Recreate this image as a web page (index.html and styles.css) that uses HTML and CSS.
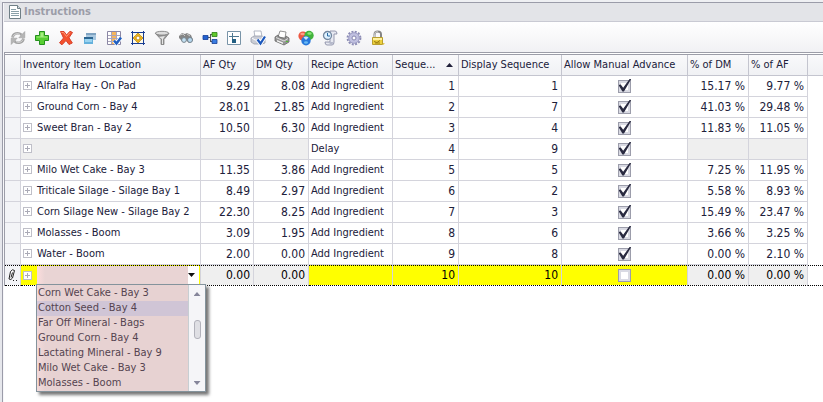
FILE: index.html
```html
<!DOCTYPE html>
<html lang="en">
<head>
<meta charset="utf-8">
<title>Instructions</title>
<link rel="stylesheet" href="styles.css">
</head>
<body>
<section class="panel">
  <header class="titlebar">
    <svg class="doc" width="14" height="14" viewBox="0 0 14 14"><path d="M1.500.5h8l3 3v10h-11z" fill="#fff" stroke="#6f7f86"/><path d="M9.500.5v3h3" fill="#d5dde0" stroke="#6f7f86"/><path d="M3 4.500h5M3 6.500h8M3 8.500h8M3 10.500h8" stroke="#8aa0a8"/></svg>
    <h1>Instructions</h1>
  </header>
  <div class="toolbar" role="toolbar" aria-label="Instruction tools">
    <button aria-label="Refresh" disabled><svg viewBox="0 0 16 16"><g fill="none" stroke="#a3a3a3" stroke-width="2.600"><path d="M2.500 7.500C3 3.500 8 1.800 11.500 4.800"/><path d="M13.500 8.500C13 12.500 8 14.200 4.500 11.200"/></g><path d="M14.800 1.500v6.300H8.800zM1.200 14.500V8.200h6z" fill="#b5b5b5" stroke="#999" stroke-width=".5"/><path d="M3 6.500C4 3.800 7.500 3 10 4.500M13 9.500c-1 2.700-4.500 3.500-7 2" stroke="#d8d8d8" fill="none"/></svg></button>
    <button aria-label="Add"><svg viewBox="0 0 16 16"><path d="M5.500 1.500h5v4h4v5h-4v4h-5v-4h-4v-5h4z" fill="#58cf33" stroke="#24911c" stroke-linejoin="round"/><path d="M6.500 2.500h3v4h4v1h-11v-1h4z" fill="#a5ee80"/></svg></button>
    <button aria-label="Delete"><svg viewBox="0 0 16 16"><path d="M2.500 1.500 6 1.500 8.500 5 12 1.200 14.500 2.500 11 7.800 14.300 13 11 14.500 8 10.500 4 14.800 1.500 12.800 5.500 8z" fill="#f4512d" stroke="#d8402a" stroke-linejoin="round"/><path d="M3.500 2.500h2l3 4L12 2.500" fill="none" stroke="#ff9a76"/></svg></button>
    <button aria-label="Windows"><svg viewBox="0 0 16 16"><path d="M4 3h10v7H4z" fill="#a9c8e0"/><path d="M4 3h10v2H4z" fill="#7fa3c2"/><path d="M2 7h9v7H2z" fill="#65b1dc"/><path d="M2 7h9v2H2z" fill="#2b6591"/><path d="M3 9h7v3H3z" fill="#9ad3f0"/></svg></button>
    <button aria-label="Choose columns"><svg viewBox="0 0 16 16"><path d="M1.500 1.500h13v13h-13z" fill="#fff" stroke="#8b87a5"/><path d="M6 2h4v12H6z" fill="#f6b55b"/><path d="M2 5.500h12M2 8.500h12M2 11.500h12M5.500 2v12M10.500 2v12" stroke="#aaa5ba"/><path d="M8 10.500l2.500 3L15 7.500" fill="none" stroke="#fff" stroke-width="4"/><path d="M8 10.500l2.500 3L15 7.500" fill="none" stroke="#205fc0" stroke-width="2.500"/></svg></button>
    <button aria-label="Best fit"><svg viewBox="0 0 16 16"><path d="M3 3h10v10H3z" fill="#fffbe9"/><path d="M2.500 1v14M13.500 1v14M1 2.500h14M1 13.500h14" stroke="#183d93"/><path d="M8 3l2.500 2.500L13 8l-2.500 2.500L8 13 5.500 10.500 3 8l2.500-2.500z" fill="#f0b51c" stroke="#a77a10" stroke-width=".7"/><circle cx="8" cy="8" r="2" fill="#fff" stroke="#c99417"/></svg></button>
    <button aria-label="Filter"><svg viewBox="0 0 16 16"><path d="M1.500 3.500L7 9.500v5h3v-5l5-6z" fill="#999" stroke="#777" stroke-width=".7"/><path d="M5 7l3 2v5h1V9l2-3z" fill="#e6e6e6"/><ellipse cx="8" cy="3.200" rx="6.700" ry="1.900" fill="#ddd" stroke="#777" stroke-width=".8"/></svg></button>
    <button aria-label="Find"><svg viewBox="0 0 16 16"><path d="M1 6l3-3 3 1 2-1 4 2 2 5-4 3-3-3-4 1-3-3z" fill="#858585"/><path d="M2 5l3-1 2 2M9 4l3 2" stroke="#c8c8c8" fill="none"/><circle cx="6" cy="10" r="2.400" fill="#c5e2f4" stroke="#75838d"/><circle cx="12" cy="10" r="2.500" fill="#b6d7ee" stroke="#75838d"/></svg></button>
    <button aria-label="Hierarchy"><svg viewBox="0 0 16 16"><path d="M6 7.500h3M9 4.500h2M9 11.500h2M8.500 4v8" stroke="#555" fill="none"/><path d="M1 5.500h5v4H1z" fill="#2362d0" stroke="#153f99" stroke-width=".8"/><path d="M10 2.500h5v4h-5z" fill="#61c82b" stroke="#2b7d15" stroke-width=".8"/><path d="M10 9.500h5v4h-5z" fill="#397ce0" stroke="#173f95" stroke-width=".8"/></svg></button>
    <button aria-label="Layout"><svg viewBox="0 0 16 16"><path d="M1.500 1.500h13v13h-13z" fill="#fff" stroke="#7994a8"/><path d="M6.500 3v10M3 6.500h10" stroke="#4f7891"/><path d="M6 9h4v4H6z" fill="#235f83"/></svg></button>
    <button aria-label="Print preview"><svg viewBox="0 0 16 16"><path d="M4 1h7l1 6H5z" fill="#fff" stroke="#a0a6b5" stroke-width=".8"/><path d="M1 8l3-2h8l3 2v5l-3 1H4l-3-2z" fill="#c9ccd5" stroke="#9a9fac" stroke-width=".8"/><path d="M2 8l3 2h9" stroke="#fff" fill="none"/><path d="M7.500 9.500l3 4L15 6.500" fill="none" stroke="#fff" stroke-width="4"/><path d="M7.500 9.500l3 4L15 6.500" fill="none" stroke="#1c58bd" stroke-width="2.200"/></svg></button>
    <button aria-label="Print"><svg viewBox="0 0 16 16"><path d="M4 7l2-6 6 1-1 6z" fill="#fff" stroke="#777" stroke-width=".8"/><path d="M1 7l3-2 1 2 6 2 1-3 3 2v4l-5 3-9-4z" fill="#959595" stroke="#686868" stroke-width=".8"/><path d="M2 7.500l8 3.500 4-2.500" stroke="#dedede" fill="none"/><path d="M3 10l6 2.500v1.500l-6-2.500z" fill="#f4f4f4"/><path d="M12 11.500h2" stroke="#4ec42c"/></svg></button>
    <button aria-label="Colours"><svg viewBox="0 0 16 16"><circle cx="5" cy="6" r="4.600" fill="#ed5842"/><circle cx="11" cy="5.500" r="4.700" fill="#42b33c"/><circle cx="8" cy="10.700" r="4.700" fill="#2878dc"/><path d="M5.500 7.500q2.500-2 5 0L8 10z" fill="#c9e8fa"/><ellipse cx="4.500" cy="4" rx="2.200" ry="1.200" fill="#ff9d87"/><ellipse cx="11.500" cy="3.500" rx="2.200" ry="1.200" fill="#8be47a"/><ellipse cx="8" cy="12.500" rx="2" ry="1.200" fill="#69bbf5"/></svg></button>
    <button aria-label="History"><svg viewBox="0 0 16 16"><path d="M8 1h5q2 0 2 3h-3v8q0 3-2 3H5q-2 0-2-3h5z" fill="#e7e9f1" stroke="#8c90a8" stroke-width=".9"/><path d="M5 12h6q0 2-1 3" fill="#b5b9cb"/><circle cx="5.500" cy="5.500" r="4" fill="#dff2ff" stroke="#7388a0" stroke-width="1.300"/><path d="M5.500 3v3H8" fill="none" stroke="#296ca5"/></svg></button>
    <button aria-label="Settings"><svg viewBox="0 0 16 16"><circle cx="8" cy="8" r="6.400" fill="none" stroke="#8c8cb5" stroke-width="2" stroke-dasharray="2 1.350"/><circle cx="8" cy="8" r="5.300" fill="#c0c0e0" stroke="#9c9cc4"/><circle cx="8" cy="8" r="2" fill="#fff" stroke="#8585ae"/></svg></button>
    <button aria-label="Lock"><svg viewBox="0 0 16 16"><path d="M4.500 8V4.500q0-3 3.300-3t3.200 3V8" fill="none" stroke="#858585" stroke-width="2"/><path d="M4.500 7V4.500q0-3 3.300-3" fill="none" stroke="#ddd" stroke-width=".8"/><path d="M2.500 7.500h10v7h-10z" fill="#ecd03e" stroke="#b89e30"/><path d="M3 8h9v2H3z" fill="#fff1a0"/><path d="M4 11.500l3 1 3-2M5 13h5" stroke="#9a7c11" fill="none"/><path d="M13 13l2 .5-2 1.500z" fill="#e1c33d"/></svg></button>
  </div>
  <table class="grid">
    <colgroup><col class="c-mark"><col class="c-item"><col class="c-af"><col class="c-dm"><col class="c-action"><col class="c-seq"><col class="c-display"><col class="c-allow"><col class="c-pdm"><col class="c-paf"><col></colgroup>
    <thead>
      <tr><th></th><th>Inventory Item Location</th><th>AF Qty</th><th>DM Qty</th><th>Recipe Action</th><th><span class="sorted">Seque...<i class="up"></i></span></th><th>Display Sequence</th><th>Allow Manual Advance</th><th>% of DM</th><th>% of AF</th><th></th></tr>
    </thead>
    <tbody>
      <tr><td></td><td><button class="plus" aria-label="Expand"></button>Alfalfa Hay - On Pad</td><td class="n">9.29</td><td class="n">8.08</td><td>Add Ingredient</td><td class="n">1</td><td class="n">1</td><td class="k"><input type="checkbox" aria-label="Allow manual advance" checked></td><td class="n">15.17 %</td><td class="n">9.77 %</td><td></td></tr>
      <tr><td></td><td><button class="plus" aria-label="Expand"></button>Ground Corn - Bay 4</td><td class="n">28.01</td><td class="n">21.85</td><td>Add Ingredient</td><td class="n">2</td><td class="n">7</td><td class="k"><input type="checkbox" aria-label="Allow manual advance" checked></td><td class="n">41.03 %</td><td class="n">29.48 %</td><td></td></tr>
      <tr><td></td><td><button class="plus" aria-label="Expand"></button>Sweet Bran - Bay 2</td><td class="n">10.50</td><td class="n">6.30</td><td>Add Ingredient</td><td class="n">3</td><td class="n">4</td><td class="k"><input type="checkbox" aria-label="Allow manual advance" checked></td><td class="n">11.83 %</td><td class="n">11.05 %</td><td></td></tr>
      <tr><td></td><td class="off"><button class="plus" aria-label="Expand"></button></td><td class="off"></td><td class="off"></td><td>Delay</td><td class="n">4</td><td class="n">9</td><td class="k"><input type="checkbox" aria-label="Allow manual advance" checked></td><td class="off"></td><td class="off"></td><td></td></tr>
      <tr><td></td><td><button class="plus" aria-label="Expand"></button>Milo Wet Cake - Bay 3</td><td class="n">11.35</td><td class="n">3.86</td><td>Add Ingredient</td><td class="n">5</td><td class="n">5</td><td class="k"><input type="checkbox" aria-label="Allow manual advance" checked></td><td class="n">7.25 %</td><td class="n">11.95 %</td><td></td></tr>
      <tr><td></td><td><button class="plus" aria-label="Expand"></button>Triticale Silage - Silage Bay 1</td><td class="n">8.49</td><td class="n">2.97</td><td>Add Ingredient</td><td class="n">6</td><td class="n">2</td><td class="k"><input type="checkbox" aria-label="Allow manual advance" checked></td><td class="n">5.58 %</td><td class="n">8.93 %</td><td></td></tr>
      <tr><td></td><td><button class="plus" aria-label="Expand"></button>Corn Silage New - Silage Bay 2</td><td class="n">22.30</td><td class="n">8.25</td><td>Add Ingredient</td><td class="n">7</td><td class="n">3</td><td class="k"><input type="checkbox" aria-label="Allow manual advance" checked></td><td class="n">15.49 %</td><td class="n">23.47 %</td><td></td></tr>
      <tr><td></td><td><button class="plus" aria-label="Expand"></button>Molasses - Boom</td><td class="n">3.09</td><td class="n">1.95</td><td>Add Ingredient</td><td class="n">8</td><td class="n">6</td><td class="k"><input type="checkbox" aria-label="Allow manual advance" checked></td><td class="n">3.66 %</td><td class="n">3.25 %</td><td></td></tr>
      <tr><td></td><td><button class="plus" aria-label="Expand"></button>Water - Boom</td><td class="n">2.00</td><td class="n">0.00</td><td>Add Ingredient</td><td class="n">9</td><td class="n">8</td><td class="k"><input type="checkbox" aria-label="Allow manual advance" checked></td><td class="n">0.00 %</td><td class="n">2.10 %</td><td></td></tr>
      <tr class="editing">
        <td class="pencil"><svg width="11" height="14" viewBox="0 0 11 14"><path d="M3.500 3.500Q5.500.5 7.500 2.500L5.500 10Q4 12.500 2 11zM5.500 4.500L4 9.500" fill="#fff" stroke="#222"/><path d="M6 12.500h1M9 12.500h1" stroke="#222"/></svg></td>
        <td class="new">
          <div class="editor">
            <button class="plus" aria-label="Expand"></button>
            <select class="combo" aria-label="Inventory item location"><option></option><option>Cotton Seed - Bay 4</option></select>
            <div class="popup">
              <ul class="options" role="listbox" aria-label="Inventory items">
                <li role="option">Corn Wet Cake - Bay 3</li>
                <li role="option" aria-selected="true">Cotton Seed - Bay 4</li>
                <li role="option">Far Off Mineral - Bags</li>
                <li role="option">Ground Corn - Bay 4</li>
                <li role="option">Lactating Mineral - Bay 9</li>
                <li role="option">Milo Wet Cake - Bay 3</li>
                <li role="option">Molasses - Boom</li>
              </ul>
              <div class="scroll"><i class="up"></i><i class="thumb"></i><i class="down"></i></div>
            </div>
          </div>
        </td>
        <td class="n off">0.00</td><td class="n off">0.00</td><td class="new"></td><td class="n new">10</td><td class="n new">10</td><td class="k new"><input type="checkbox" aria-label="Allow manual advance"></td><td class="n off">0.00 %</td><td class="n off">0.00 %</td><td></td>
      </tr>
    </tbody>
  </table>
</section>
</body>
</html>
```
FILE: styles.css
```css
* { box-sizing: border-box; }

body {
  margin: 0;
  background: #f1f1f4;
  color: #20203a;
  font: 11px/14px "DejaVu Sans Condensed", "Noto Sans", sans-serif;
}

button { padding: 0; border: 0; background: none; }

.panel {
  min-height: 100vh;
  border-top: 2px solid #eff0f3;
  border-left: 2px solid #e6e7ec;
  background: #fff;
  box-shadow: inset 1px 1px #9b9ca9, inset 2px 2px #f7f7fa;
  padding: 1px 0 0 2px;
}

.titlebar {
  display: flex;
  align-items: center;
  gap: 2px;
  height: 19px;
  padding-left: 4px;
  border-bottom: 1px solid #c9cad3;
  background: #e3e4e8;
}

.titlebar h1 {
  margin: 0;
  color: #9c9da8;
  font-size: 11px;
  font-weight: bold;
}

.toolbar {
  display: flex;
  align-items: center;
  gap: 8px;
  height: 30px;
  padding: 2px 6px 0;
  background: linear-gradient(#fff, #f1f1f4);
}

.toolbar button, .toolbar svg { display: block; width: 16px; height: 16px; }

.grid {
  width: 100%;
  table-layout: fixed;
  border-collapse: separate;
  border-spacing: 0;
  border-top: 3px double #9c9da8;
  border-left: 1px solid #9c9da8;
}

.c-mark { width: 16px; }
.c-item { width: 180px; }
.c-af { width: 53px; }
.c-dm { width: 55px; }
.c-action { width: 84px; }
.c-seq { width: 66px; }
.c-display { width: 103px; }
.c-allow { width: 126px; }
.c-pdm { width: 61px; }
.c-paf { width: 59px; }

th, td {
  height: 21px;
  padding: 0 3px 0 2px;
  border-right: 1px solid #d4d4dc;
  border-bottom: 1px solid #d4d4dc;
  text-align: left;
  white-space: nowrap;
}

th {
  padding: 0 2px;
  border-color: #c4c5cf;
  background: linear-gradient(#f9f9fb, #f0f1f4);
  font-weight: normal;
}

th:last-child, td:last-child { border-right: 0; }
td:last-child { border-bottom: 0; }
td:first-child { padding: 0; background: #f3f4f7; }
.n { padding-right: 3px; font-size: 12px; text-align: right; }
.k { text-align: center; }
.off { background: #efefef; }
.new { background: #ff0; }

.sorted { display: flex; align-items: center; justify-content: space-between; padding-right: 3px; }

.up, .down {
  width: 7px;
  height: 4px;
  background: currentColor;
  clip-path: polygon(50% 0, 100% 100%, 0 100%);
}

.down { clip-path: polygon(0 0, 100% 0, 50% 100%); }

.plus {
  width: 9px;
  height: 9px;
  margin-right: 5px;
  border: 1px solid #bfbfc8;
  background:
    linear-gradient(#aaaab6, #aaaab6) center / 5px 1px no-repeat,
    linear-gradient(#aaaab6, #aaaab6) center / 1px 5px no-repeat,
    #fff;
}

input[type="checkbox"] {
  appearance: none;
  display: block;
  width: 13px;
  height: 13px;
  margin: 0 auto;
  border: 1px solid #9c9dab;
  background: #fff;
  box-shadow: inset 0 0 0 2px #d9dae3;
}

input:checked::after {
  content: "";
  display: block;
  width: 13px;
  height: 13px;
  margin-top: -2px;
  background: #292a40;
  clip-path: polygon(0 50%, 17% 46%, 36% 72%, 88% 0, 100% 0, 42% 100%, 30% 100%);
}

.editing td {
  border-bottom: 1px dotted #000;
  background-clip: padding-box;
  background-image: repeating-linear-gradient(90deg, #000 0 1px, transparent 1px 2px);
  background-size: 100% 1px;
  background-repeat: no-repeat;
  color: #000;
}

.pencil svg { display: block; margin: 0 auto; }
td.new:nth-child(2) { padding-right: 1px; }

.editor { position: relative; display: flex; align-items: center; }

.combo {
  flex: 1;
  height: 18px;
  border: 0;
  border-radius: 0;
  appearance: none;
  background:
    linear-gradient(90deg, #fcdcdc, #e9d4d4 8px) left / 151px 100% no-repeat,
    #fff;
}

.editor::after {
  content: "";
  position: absolute;
  right: 4px;
  width: 7px;
  height: 4px;
  background: #111;
  clip-path: polygon(0 0, 100% 0, 50% 100%);
}

.popup {
  position: absolute;
  z-index: 1;
  top: 100%;
  left: 13px;
  display: flex;
  width: 170px;
  border: 1px solid #84939c;
  background: #fff;
  box-shadow: 3px 3px 3px #777;
  color: #554450;
}

.options {
  flex: 1;
  margin: 0;
  padding: 1px 0 0;
  list-style: none;
  background: linear-gradient(90deg, #f4dada, #e7d2d2 8px);
}

.options li { height: 15px; padding-left: 1px; }
.options [aria-selected="true"] { background: linear-gradient(90deg, #d9cbdc, #d0c5d6 8px); }

.scroll {
  display: flex;
  flex-direction: column;
  align-items: center;
  justify-content: space-between;
  width: 17px;
  padding: 7px 0 6px;
  border-left: 1px solid #c7ced2;
  background: #f5f5f8;
  color: #85859a;
}

.thumb {
  width: 7px;
  height: 19px;
  margin-bottom: 18px;
  border: 1px solid #b2b2bb;
  border-radius: 3px;
  background: #dfdfe4;
}
```
